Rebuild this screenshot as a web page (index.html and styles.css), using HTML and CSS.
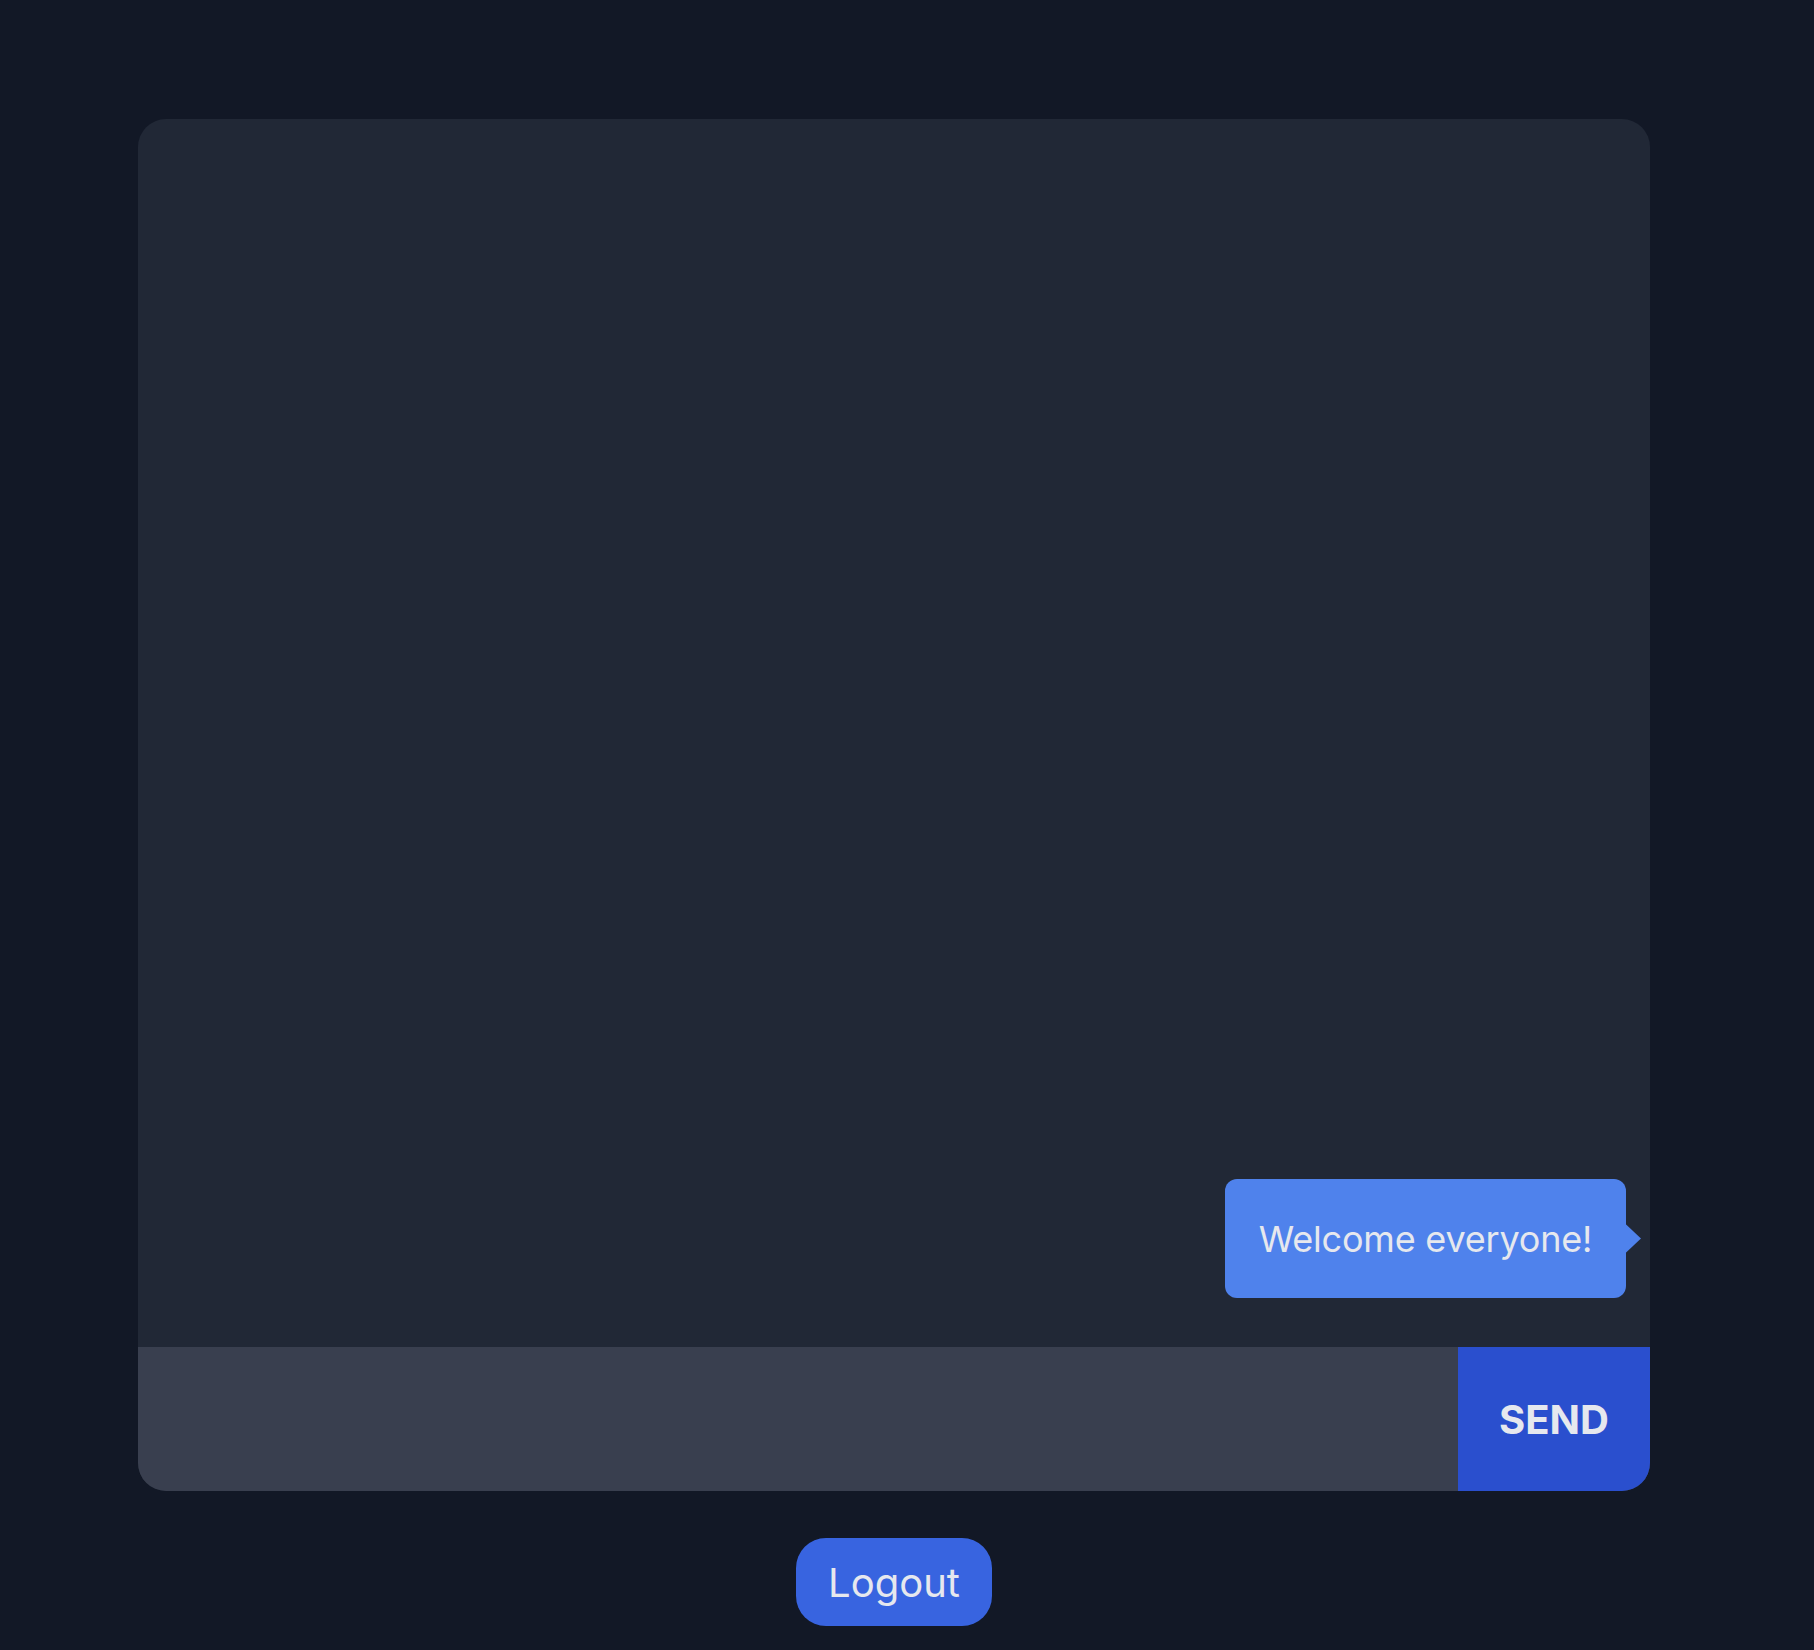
FILE: index.html
```html
<!DOCTYPE html>
<html lang="en">
  <head>
    <meta charset="UTF-8" />
    <meta name="viewport" content="width=device-width, initial-scale=1.0" />
    <title>Chat</title>
    <link rel="stylesheet" href="styles.css">
  </head>
  <body>
    <div class="page">
      <div class="chat">
        <!-- Message list -->
        <div class="messages">
          <div class="bubble mine">Welcome everyone!</div>
        </div>
        <!-- Composer -->
        <form class="composer">
          <input class="composer-input" type="text" />
          <button class="send-btn" type="button">SEND</button>
        </form>
      </div>
      <button class="logout-btn" type="button">Logout</button>
    </div>
  </body>
</html>
```

FILE: styles.css
```css
* {
  box-sizing: border-box;
  margin: 0;
  padding: 0;
}
html,
body {
  height: 100%;
}
body {
  background: #121826;
  font-family: Inter, "Noto Sans", sans-serif;
  color: #e5e7eb;
  overflow: hidden;
}
/* Page wrapper */
.page {
  display: flex;
  flex-direction: column;
  align-items: center;
  width: 1512px;
  margin-left: 138px;
  padding-top: 119px;
}
/* Chat card */
.chat {
  width: 100%;
  height: 1372px;
  display: flex;
  flex-direction: column;
  background: #212836;
  border-radius: 28px;
  overflow: hidden;
}
.messages {
  flex: 1;
  display: flex;
  flex-direction: column;
  justify-content: flex-end;
  align-items: flex-end;
  padding: 0 24px 49px;
}
/* Speech bubble */
.bubble {
  position: relative;
  width: 401px;
  height: 119px;
  display: flex;
  align-items: center;
  justify-content: center;
  border-radius: 12px;
  font-size: 36px;
  letter-spacing: -0.2px;
  color: #e6e8ee;
}
.bubble.mine {
  background: #4f82ec;
}
.bubble.mine::after {
  content: "";
  position: absolute;
  right: -15px;
  top: 50%;
  transform: translateY(-50%);
  width: 16px;
  height: 30px;
  background: #4f82ec;
  clip-path: polygon(0 0, 100% 50%, 0 100%);
}
/* Composer */
.composer {
  display: flex;
  height: 144px;
  background: #393f4f;
}
.composer-input {
  flex: 1;
  border: none;
  outline: none;
  background: transparent;
  color: #e5e7eb;
  font-family: inherit;
  font-size: 36px;
  padding: 0 30px;
}
.send-btn {
  width: 192px;
  border: none;
  background: #2a4fce;
  color: #e6e8ee;
  font-family: inherit;
  font-size: 40px;
  font-weight: 700;
  cursor: pointer;
}
/* Logout button */
.logout-btn {
  margin-top: 47px;
  width: 196px;
  height: 88px;
  border: none;
  border-radius: 30px;
  background: #3864e0;
  color: #e6e8ee;
  font-family: inherit;
  font-size: 40px;
  cursor: pointer;
}
```
